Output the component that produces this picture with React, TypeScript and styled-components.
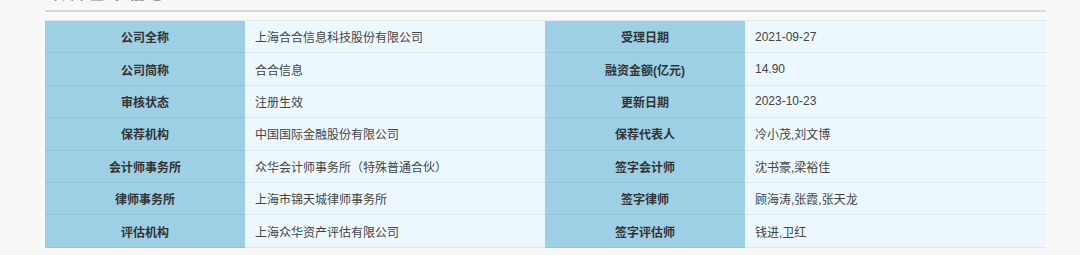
import React from 'react';
import styled, { createGlobalStyle } from 'styled-components';

const GlobalStyle = createGlobalStyle`
  body {
    margin: 0;
    background: #f8f8f8;
    font-family: "Liberation Sans", "Noto Sans CJK SC", sans-serif;
  }
`;

interface Row {
  label1: string;
  value1: string;
  label2: string;
  value2: string;
}

const rows: Row[] = [
  { label1: '公司全称', value1: '上海合合信息科技股份有限公司', label2: '受理日期', value2: '2021-09-27' },
  { label1: '公司简称', value1: '合合信息', label2: '融资金额(亿元)', value2: '14.90' },
  { label1: '审核状态', value1: '注册生效', label2: '更新日期', value2: '2023-10-23' },
  { label1: '保荐机构', value1: '中国国际金融股份有限公司', label2: '保荐代表人', value2: '冷小茂,刘文博' },
  { label1: '会计师事务所', value1: '众华会计师事务所（特殊普通合伙）', label2: '签字会计师', value2: '沈书豪,梁裕佳' },
  { label1: '律师事务所', value1: '上海市锦天城律师事务所', label2: '签字律师', value2: '顾海涛,张霞,张天龙' },
  { label1: '评估机构', value1: '上海众华资产评估有限公司', label2: '签字评估师', value2: '钱进,卫红' },
];

const App: React.FC = () => {
  return (
    <Page>
      <GlobalStyle />
      <Title>项目基本信息</Title>
      <Rule />
      <Table>
        <colgroup>
          <Col $w={200} />
          <Col $w={300} />
          <Col $w={200} />
          <Col $w={301} />
        </colgroup>
        <tbody>
          {rows.map((r) => (
            <tr key={r.label1}>
              <LabelCell>{r.label1}</LabelCell>
              <ValueCell>{r.value1}</ValueCell>
              <LabelCell>{r.label2}</LabelCell>
              <ValueCell>{r.value2}</ValueCell>
            </tr>
          ))}
        </tbody>
      </Table>
    </Page>
  );
};

const Page = styled.div`
  width: 1001px;
  margin-left: 45px;
  overflow: hidden;
`;

const Title = styled.div`
  font-size: 16px;
  line-height: 20px;
  height: 20px;
  margin-top: -16px;
  padding-left: 4px;
  color: #888;
  font-weight: bold;
  letter-spacing: 4px;
`;

const Rule = styled.div`
  height: 2px;
  margin-top: 6px;
  background: #d9d9d9;
`;

const Table = styled.table`
  width: 1001px;
  margin-top: 8px;
  border-collapse: collapse;
  table-layout: fixed;
  border-top: 1px solid #e2e8eb;

  tr {
    height: 32.4px;
  }
`;

const Col = styled.col<{ $w: number }>`
  width: ${(p) => p.$w}px;
`;

const LabelCell = styled.td`
  background: #9dd0e4;
  color: #333;
  font-weight: bold;
  font-size: 12px;
  text-align: center;
  padding: 0;
  border-bottom: 1px solid #92c5d9;
`;

const ValueCell = styled.td`
  background: #ecf8fd;
  color: #444;
  font-size: 12px;
  padding: 0 0 0 10px;
  border-bottom: 1px solid #dee8ec;
`;

export default App;
